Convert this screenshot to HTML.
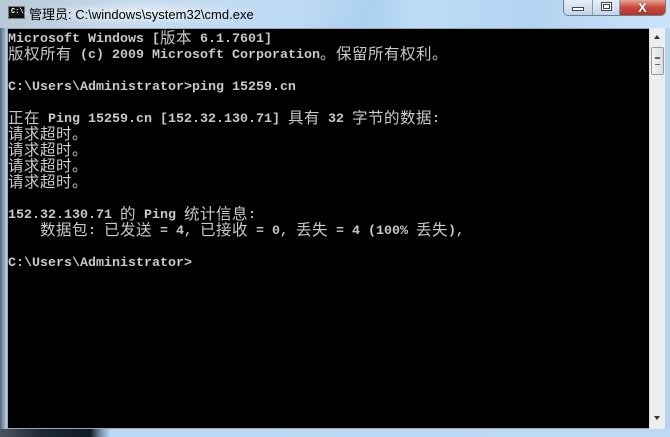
<!DOCTYPE html>
<html><head><meta charset="utf-8"><style>
*{margin:0;padding:0;box-sizing:border-box}
html{width:670px;height:437px;overflow:hidden}
body{width:670px;height:437px;overflow:hidden;position:relative;background:linear-gradient(90deg,#5a6470 0px,#8fa5b8 4px,#b7d4ef 7px);}
.top{position:absolute;left:0;top:0;width:670px;height:28px;background:linear-gradient(100deg,#b8c8d6 0%,#c7dcef 20%,#bcdaf5 45%,#acd0ef 55%,#bcdcf7 62%,#b3d4f1 80%,#c9e3fb 100%);}
.glow{position:absolute;left:20px;top:2px;width:240px;height:22px;background:radial-gradient(ellipse at center,rgba(235,240,245,.9),rgba(235,240,245,0) 70%);}
.ttl{position:absolute;left:29px;top:4px;font:13px "Liberation Sans","Noto Sans CJK SC",sans-serif;color:#000;}
.ico{position:absolute;left:8px;top:6px;width:17px;height:13px;background:#111;border:1px solid #777;color:#fff;font:bold 7px "Liberation Mono",monospace;line-height:11px;padding-left:2px}
.btns{position:absolute;left:563px;top:0;height:16px;width:103px;border:1px solid #6d7f94;border-top:none;border-radius:0 0 5px 5px;overflow:hidden;display:flex}
.b{height:15px;background:linear-gradient(#e6eef7,#c2d3e6);border-right:1px solid #8a9bb0;position:relative}
.x{background:linear-gradient(#e9a597,#c8473a 50%,#b3362a);border:none;flex:1}
.con{position:absolute;left:7px;top:28px;width:642px;height:401px;background:#000;border:1px solid #9aa7b4;border-right:none}
.sb{position:absolute;left:649px;top:28px;width:16px;height:401px;background:#eceeef;border-left:1px solid #ddd}
.thumb{position:absolute;left:1px;top:19px;width:13px;height:28px;border:1px solid #999;border-radius:2px;background:linear-gradient(90deg,#f4f4f4,#dcdcdc)}
.bot{position:absolute;left:0;top:429px;width:670px;height:8px;background:linear-gradient(90deg,#4b5560 0,#1d2833 40px,#0e1a26 90px,#6f8aa3 100px,#b8d8f5 110px,#bcdaf6 100%)}
.t{position:absolute;left:8px;top:32px;font:bold 13.33px "Liberation Mono",monospace;color:#c8c8c8}
.t div{height:16px;line-height:16px;white-space:pre}
.c{font:normal 15.5px/16px "Noto Sans CJK SC",sans-serif;vertical-align:top;position:relative;top:-3px}
.c i{font-style:normal;display:inline-block;width:16px;height:16px;vertical-align:top;line-height:16px}
</style></head><body>
<div class="top"><div class="glow"></div></div>
<div class="ico">C:\_</div>
<div class="ttl">管理员: C:\windows\system32\cmd.exe</div>
<div class="btns">
<div class="b" style="width:29px"><div style="position:absolute;left:8px;top:7px;width:12px;height:4px;border:1px solid #445;background:#fff"></div></div>
<div class="b" style="width:27px"><div style="position:absolute;left:8px;top:2px;width:11px;height:9px;border:1px solid #445;background:#fff"><div style="margin:1px;height:5px;border:1px solid #445"></div></div></div>
<div class="b x"><div style="color:#fff;font:bold 13px 'Liberation Sans',sans-serif;text-align:center;line-height:15px;text-shadow:0 0 1px #333">X</div></div>
</div>
<div class="con"></div>
<div class="sb"><div style="position:absolute;left:4px;top:7px;border:3.5px solid transparent;border-bottom:4px solid #333;border-top:none;width:0"></div><div class="thumb"><div style="margin:9px 3px 0;height:8px;border-top:1px solid #666;border-bottom:1px solid #666;box-shadow:inset 0 3px 0 -2px #666"></div></div><div style="position:absolute;left:4px;top:388px;border:3.5px solid transparent;border-top:4px solid #333;border-bottom:none;width:0"></div></div>
<div class="bot"></div>
<div class="t"><div>Microsoft Windows [<span class="c"><i>版</i><i>本</i></span> 6.1.7601]</div><div><span class="c"><i>版</i><i>权</i><i>所</i><i>有</i></span> (c) 2009 Microsoft Corporation<span class="c"><i>。</i><i>保</i><i>留</i><i>所</i><i>有</i><i>权</i><i>利</i><i>。</i></span></div><div></div><div>C:\Users\Administrator&gt;ping 15259.cn</div><div></div><div><span class="c"><i>正</i><i>在</i></span> Ping 15259.cn [152.32.130.71] <span class="c"><i>具</i><i>有</i></span> 32 <span class="c"><i>字</i><i>节</i><i>的</i><i>数</i><i>据</i></span>:</div><div><span class="c"><i>请</i><i>求</i><i>超</i><i>时</i><i>。</i></span></div><div><span class="c"><i>请</i><i>求</i><i>超</i><i>时</i><i>。</i></span></div><div><span class="c"><i>请</i><i>求</i><i>超</i><i>时</i><i>。</i></span></div><div><span class="c"><i>请</i><i>求</i><i>超</i><i>时</i><i>。</i></span></div><div></div><div>152.32.130.71 <span class="c"><i>的</i></span> Ping <span class="c"><i>统</i><i>计</i><i>信</i><i>息</i></span>:</div><div>    <span class="c"><i>数</i><i>据</i><i>包</i></span>: <span class="c"><i>已</i><i>发</i><i>送</i></span> = 4, <span class="c"><i>已</i><i>接</i><i>收</i></span> = 0, <span class="c"><i>丢</i><i>失</i></span> = 4 (100% <span class="c"><i>丢</i><i>失</i></span>),</div><div></div><div>C:\Users\Administrator&gt;</div></div>
</body></html>
